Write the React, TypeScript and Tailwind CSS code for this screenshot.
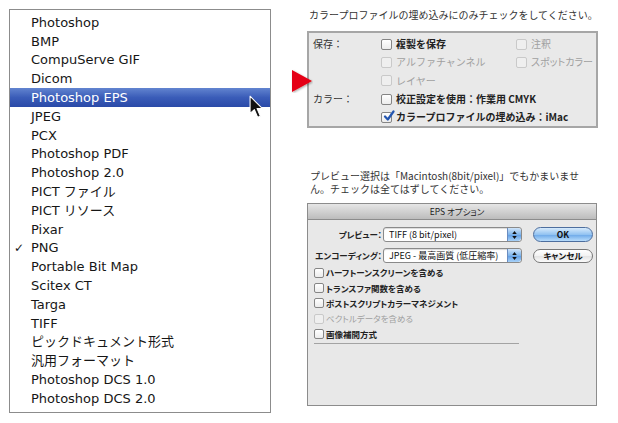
import React from "react";

const formats = [
  "Photoshop",
  "BMP",
  "CompuServe GIF",
  "Dicom",
  "Photoshop EPS",
  "JPEG",
  "PCX",
  "Photoshop PDF",
  "Photoshop 2.0",
  "PICT ファイル",
  "PICT リソース",
  "Pixar",
  "PNG",
  "Portable Bit Map",
  "Scitex CT",
  "Targa",
  "TIFF",
  "ピックドキュメント形式",
  "汎用フォーマット",
  "Photoshop DCS 1.0",
  "Photoshop DCS 2.0",
];

const Box: React.FC<{ disabled?: boolean; checked?: boolean; small?: boolean }> = ({
  disabled,
  checked,
  small,
}) => (
  <span
    className={`relative inline-block shrink-0 rounded-[2px] border ${
      small ? "w-[10px] h-[10px]" : "w-[11px] h-[11px]"
    } ${
      disabled
        ? "border-[#c9c9c9] bg-[#efefef]"
        : "border-[#858585] bg-[linear-gradient(#ffffff,#ececec)]"
    }`}
  >
    {checked && (
      <svg viewBox="0 0 12 12" className="absolute left-[1px] -top-[3px] w-[12px] h-[12px]">
        <path d="M2 6.5 L4.8 9.5 L10.5 1.5" fill="none" stroke="#2456b0" strokeWidth="2.2" strokeLinecap="round" strokeLinejoin="round" />
      </svg>
    )}
  </span>
);

const Stepper = () => (
  <span className="ml-auto flex h-full w-[14px] flex-col items-center justify-center gap-[2px] rounded-r-[3px] border-l border-[#6a8cc0] bg-[linear-gradient(#cfe4fa,#7fb4ea_50%,#5c9be4_51%,#a9d2f8)]">
    <svg viewBox="0 0 6 4" className="w-[5px] h-[3px]">
      <path d="M0 4 L3 0 L6 4 Z" fill="#111" />
    </svg>
    <svg viewBox="0 0 6 4" className="w-[5px] h-[3px]">
      <path d="M0 0 L3 4 L6 0 Z" fill="#111" />
    </svg>
  </span>
);

const Select: React.FC<{ value: string }> = ({ value }) => (
  <div className="flex h-[15px] w-[139px] items-center overflow-hidden rounded-[3px] border border-[#8a8a8a] bg-white shadow-[inset_0_1px_1px_rgba(0,0,0,0.15)]">
    <span className="whitespace-nowrap pl-[5px] text-[9px] leading-none text-[#111]">{value}</span>
    <Stepper />
  </div>
);

export default function App() {
  return (
    <div className="relative flex h-[423px] w-[618px] overflow-hidden bg-white font-['Noto_Sans_CJK_JP',sans-serif]">
      {/* format list */}
      <div className="pl-[9px] pt-[9px]">
        <div className="h-[404px] w-[262px] border border-[#8c8c8c] bg-white pt-[3px] font-['DejaVu_Sans','Noto_Sans_CJK_JP',sans-serif]">
          {formats.map((f, i) => (
            <div
              key={f}
              className={`flex h-[18.8px] items-center text-[13px] leading-none ${
                i === 4
                  ? "bg-[linear-gradient(#6284d0,#3a5cb8_50%,#2a4aa8)] text-white"
                  : "text-[#161616]"
              }`}
            >
              <span className="w-[21px] pl-[4px] text-[12px]">{f === "PNG" ? "✓" : ""}</span>
              <span>{f}</span>
            </div>
          ))}
        </div>
      </div>

      {/* right column */}
      <div className="ml-[36px] flex w-[292px] flex-col">
        <p className="mt-[8px] pl-[2px] text-[10px] leading-[13px] text-[#333] whitespace-nowrap">
          カラープロファイルの埋め込みにのみチェックをしてください。
        </p>

        <div className="mt-[10px] h-[97px] w-[291px] border-2 border-[#a6a6a6] bg-[#e9e9e9] pl-[4px] pt-[2px] text-[10px] leading-none whitespace-nowrap">
          <div className="grid grid-cols-[68px_135px_1fr] grid-rows-[repeat(5,18.3px)] items-center">
            <span className="text-[#333]">保存：</span>
            <span className="flex items-center gap-[4px] font-bold text-[#222]">
              <Box />
              複製を保存
            </span>
            <span className="flex items-center gap-[4px] text-[#a0a0a0]">
              <Box disabled />
              注釈
            </span>

            <span />
            <span className="flex items-center gap-[4px] text-[#a0a0a0]">
              <Box disabled />
              アルファチャンネル
            </span>
            <span className="flex items-center gap-[4px] text-[#a0a0a0] [font-feature-settings:'palt']">
              <Box disabled />
              スポットカラー
            </span>

            <span />
            <span className="flex items-center gap-[4px] text-[#a0a0a0]">
              <Box disabled />
              レイヤー
            </span>
            <span />

            <span className="text-[#333]">カラー：</span>
            <span className="col-span-2 flex items-center gap-[4px] font-bold text-[#222]">
              <Box />
              校正設定を使用：作業用 CMYK
            </span>

            <span />
            <span className="col-span-2 flex items-center gap-[4px] font-bold text-[#222]">
              <Box checked />
              カラープロファイルの埋め込み：iMac
            </span>
          </div>
        </div>

        <p className="mt-[41px] pl-[3px] pr-[4px] text-[10px] leading-[13px] text-[#333]">
          プレビュー選択は「Macintosh(8bit/pixel)」でもかまいません。チェックは全てはずしてください。
        </p>

        {/* EPS options dialog */}
        <div className="mt-[8px] h-[203px] w-[290px] border border-[#8c8c8c] bg-[#e8e8e8] text-[8.5px] leading-none whitespace-nowrap [font-feature-settings:'palt']">
          <div className="flex h-[16px] items-center justify-center border-b border-[#8c8c8c] bg-[linear-gradient(#e6e6e6,#bcbcbc)] pl-[10px] text-[#222]">
            EPS オプション
          </div>

          <div className="mt-[7px] flex h-[15px] items-center">
            <span className="w-[75px] pr-[1px] text-right font-bold text-[#222]">プレビュー：</span>
            <Select value="TIFF (8 bit/pixel)" />
            <span className="ml-[11px] flex h-[15px] w-[60px] items-center justify-center rounded-full border border-[#4d6e9e] bg-[linear-gradient(#d6eafc,#93c3f1_50%,#6aa7e8_51%,#b8dcfb)] font-bold text-[#111]">
              OK
            </span>
          </div>

          <div className="mt-[6px] flex h-[15px] items-center">
            <span className="w-[75px] pr-[1px] text-right font-bold text-[#222]">エンコーディング：</span>
            <Select value="JPEG - 最高画質 (低圧縮率)" />
            <span className="ml-[11px] flex h-[14px] w-[60px] items-center justify-center rounded-full border border-[#777] bg-[linear-gradient(#ffffff,#f2f2f2_50%,#e3e3e3_51%,#fbfbfb)] font-bold text-[#111]">
              キャンセル
            </span>
          </div>

          <div className="mt-[2px] pl-[6px]">
            {[
              ["ハーフトーンスクリーンを含める", false],
              ["トランスファ関数を含める", false],
              ["ポストスクリプトカラーマネジメント", false],
              ["ベクトルデータを含める", true],
              ["画像補間方式", false],
            ].map(([label, dis]) => (
              <div key={label as string} className="flex h-[15.3px] items-center gap-[2px]">
                <Box small disabled={dis as boolean} />
                <span className={dis ? "text-[#a0a0a0]" : "font-bold text-[#222]"}>{label}</span>
              </div>
            ))}
            <div className="mt-[2px] h-[2px] w-[205px] border-t border-[#a3a3a3] border-b-white bg-transparent" />
          </div>
        </div>
      </div>

      {/* red pointer */}
      <svg viewBox="0 0 22 24" className="absolute left-[291px] top-[69px] w-[22px] h-[24px]">
        <defs>
          <filter id="sh" x="-30%" y="-30%" width="160%" height="160%">
            <feDropShadow dx="1" dy="1" stdDeviation="1" floodColor="#000" floodOpacity="0.35" />
          </filter>
        </defs>
        <path d="M1 1 L21 12 L1 23 Z" fill="#e50014" filter="url(#sh)" />
      </svg>

      {/* mouse cursor */}
      <svg viewBox="0 0 13 22" className="absolute left-[249px] top-[95px] w-[14px] h-[24px]">
        <path d="M1 1 L1 17 L5 13.5 L8 20.5 L10.5 19.5 L7.5 12.5 L12.5 12.5 Z" fill="#111" stroke="#fff" strokeWidth="1" strokeLinejoin="round" />
      </svg>
    </div>
  );
}
